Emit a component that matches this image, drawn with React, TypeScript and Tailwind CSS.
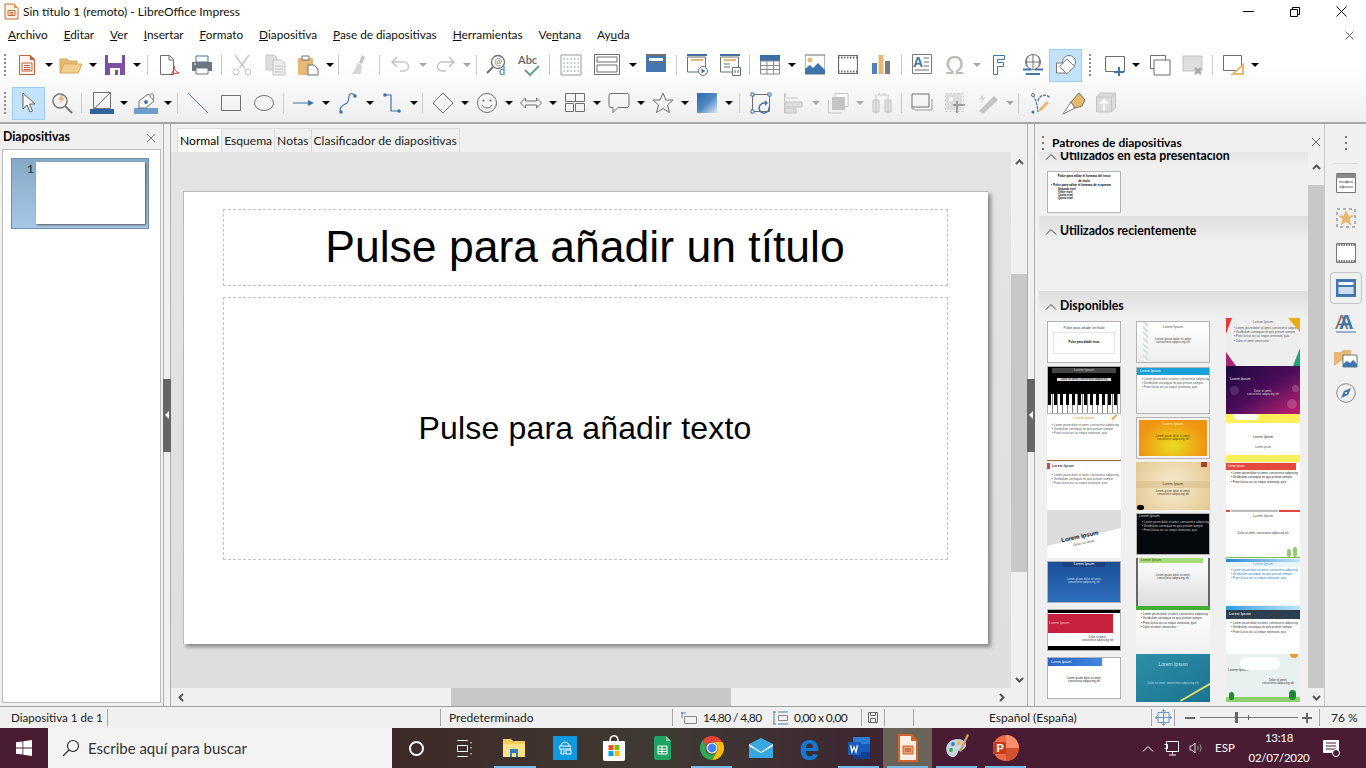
import type { ReactNode } from 'react';

const BLUE = '#3f74ad';
const GRAY = '#6f6f6f';
const OFF = '#c4c4c4';
const TAN = '#e6b873';
const RUST = '#c4603c';

function Ico({ children, w = 22, h = 22 }: { children: ReactNode; w?: number; h?: number }) {
  return (
    <svg width={w} height={h} viewBox={`0 0 ${w} ${h}`} fill="none" stroke={GRAY} strokeWidth="1">
      {children}
    </svg>
  );
}

function C({ children, className = '' }: { children: ReactNode; className?: string }) {
  return <div className={`flex h-[33px] w-[33px] shrink-0 items-center justify-center ${className}`}>{children}</div>;
}

function A({ off = false, className = '' }: { off?: boolean; className?: string }) {
  return (
    <div className={`flex h-[33px] w-[11px] shrink-0 items-center justify-center ${className}`}>
      <div className={`h-0 w-0 border-x-[4px] border-t-[4px] border-x-transparent ${off ? 'border-t-[#a8a8a8]' : 'border-t-black'}`} />
    </div>
  );
}

function S({ className = 'w-[7px]' }: { className?: string }) {
  return (
    <div className={`flex h-[33px] shrink-0 items-center justify-center ${className}`}>
      <div className="h-[20px] w-px bg-[#c9c9c9]" />
    </div>
  );
}

function Grip({ className = '' }: { className?: string }) {
  return (
    <div className={`flex h-[22px] shrink-0 flex-col justify-between ${className}`}>
      {[0, 1, 2, 3, 4, 5].map((i) => (
        <div key={i} className="h-[2px] w-[2px] bg-[#8c8c8c]" />
      ))}
    </div>
  );
}

function ToolbarOne() {
  return (
    <div className="flex h-[38px] items-center pl-[4px]">
      <Grip className="w-[6px]" />
      <C>
        <Ico>
          <path d="M3.500 1.500h11l4 4v15h-15z" stroke={RUST} fill="#fdf4ee" />
          <path d="M14 1l5 5h-5z" fill={RUST} stroke="none" />
          <path d="M6 9h10v8H6z" stroke={RUST} />
          <path d="M8 11.500h6M8 13.500h6M8 15.500h6" stroke={RUST} />
        </Ico>
      </C>
      <A />
      <C>
        <Ico w={24}>
          <path d="M1 19V5h7l2 2h8v3" stroke="#d9a95f" fill={TAN} />
          <path d="M1 19l4-9h18l-4 9z" fill="#f2cf93" stroke="#d9a95f" />
        </Ico>
      </C>
      <A />
      <C>
        <Ico>
          <path d="M1 1h20v20H1z" fill="#7f4fa6" stroke="none" />
          <path d="M4 1h14v8H4z" fill="#fff" stroke="none" />
          <path d="M6 14h10v7H6z" fill="#fff" stroke="none" />
          <path d="M11 16h3v5h-3z" fill="#7f4fa6" stroke="none" />
        </Ico>
      </C>
      <A />
      <S className="w-[10px]" />
      <C>
        <Ico>
          <path d="M2.500 1.500h9l4 4v15h-13z" />
          <path d="M11 1.500v4.500h4.500" />
          <path d="M13 21c2-3 3-6 3-9 0 4 2 6 5 7-3 0-6 1-8 2z" stroke="#d93b2b" />
        </Ico>
      </C>
      <C>
        <Ico>
          <path d="M5 2h12v6H5z" fill="#fff" stroke={BLUE} />
          <path d="M1 8h20v9H1z" fill="#6d7680" stroke="none" />
          <path d="M5 14h12v6H5z" fill="#fff" stroke="#6d7680" />
          <path d="M3 10h2" stroke="#fff" />
        </Ico>
      </C>
      <S />
      <C>
        <Ico>
          <g stroke={OFF}>
            <path d="M4 1l9.500 13M18 1L8.500 14" strokeWidth="1.300" />
            <circle cx="5" cy="18" r="3" />
            <circle cx="17" cy="18" r="3" />
          </g>
        </Ico>
      </C>
      <C>
        <Ico>
          <path d="M2 1h8l3 3v12H2z" fill="#dedede" stroke={OFF} />
          <path d="M9 6h8l4 4v11H9z" fill="#ececec" stroke={OFF} />
          <path d="M11 12h8M11 15h8M11 18h8" stroke={OFF} />
        </Ico>
      </C>
      <C>
        <Ico>
          <path d="M1 4h15v17H1z" fill={TAN} stroke="none" />
          <path d="M5 2h7v4H5z" fill="#fff" stroke={GRAY} />
          <path d="M11 11h6l4 4v6H11z" fill="#fff" stroke={GRAY} />
        </Ico>
      </C>
      <A />
      <S />
      <C>
        <Ico>
          <path d="M14 1l3 2-3 7-3-1z" fill={OFF} stroke="none" />
          <path d="M9 9l5 2-1 9H3c3-2 5-6 6-11z" fill="#d6d6d6" stroke="none" />
        </Ico>
      </C>
      <S className="w-[9px]" />
      <C>
        <Ico>
          <path d="M7 3L2 8l5 5M2 8h12c6 0 6 9 0 9h-4" stroke={OFF} strokeWidth="1.500" />
        </Ico>
      </C>
      <A off />
      <C>
        <Ico>
          <path d="M15 3l5 5-5 5M20 8H8c-6 0-6 9 0 9h4" stroke={OFF} strokeWidth="1.500" />
        </Ico>
      </C>
      <A off />
      <S className="w-[8px]" />
      <C>
        <Ico>
          <circle cx="12" cy="8" r="6.500" stroke={GRAY} strokeWidth="1.300" />
          <path d="M7 13l-6 6" stroke={GRAY} strokeWidth="2" />
          <text x="8.500" y="11" fontSize="9" fill={GRAY} stroke="none">@</text>
          <text x="13" y="21" fontSize="11" fill={BLUE} stroke="none">d</text>
        </Ico>
      </C>
      <C>
        <Ico w={24}>
          <text x="0" y="10" fontSize="11" fontWeight="700" fill={GRAY} stroke="none">Abc</text>
          <path d="M7 16l5 5 9-9" stroke="#62a87a" strokeWidth="2" />
        </Ico>
      </C>
      <S />
      <C className="ml-[1px]">
        <Ico>
          <path d="M1 1h20v20H1z" stroke="#9a9a9a" />
          <path d="M3.500 5h16M3.500 9h16M3.500 13h16M3.500 17h16" stroke="#6d8fb5" strokeDasharray="1.500 2" />
        </Ico>
      </C>
      <C className="ml-[3px]">
        <Ico w={26}>
          <path d="M0.500 0.500h25v20h-25z" strokeWidth="1" />
          <path d="M3 3h20v5H3zM3 11h20v7H3z" />
        </Ico>
      </C>
      <A className="ml-[4px]" />
      <C className="ml-[1px]">
        <Ico w={20}>
          <path d="M0 1h20v17H0z" fill="#4278b2" stroke="none" />
          <path d="M3 4h14v3H3z" fill="#fff" stroke="none" />
          <path d="M0 0.500h20v1H0zM0 8.500h20" stroke="#6f6f6f" />
        </Ico>
      </C>
      <S className="w-[8px]" />
      <C>
        <Ico>
          <path d="M1 1h20" stroke="#44719f" strokeWidth="2" />
          <path d="M1.500 3h18v15h-18z" />
          <path d="M5 6h12" stroke={TAN} strokeWidth="2" />
          <circle cx="17" cy="17" r="4.500" fill="#fff" />
          <path d="M15.500 14.500v5l4-2.500z" fill={BLUE} stroke="none" />
        </Ico>
      </C>
      <C>
        <Ico>
          <path d="M1 1h20" stroke="#44719f" strokeWidth="2" />
          <path d="M1.500 3h18v15h-18z" />
          <path d="M5 6h12" stroke={TAN} strokeWidth="2" />
          <path d="M5 10h6M5 13h6" />
          <path d="M13.500 13.500h8v8h-8z" fill="#fff" />
          <path d="M16 16v3M19 16v3" stroke={BLUE} />
        </Ico>
      </C>
      <S />
      <C>
        <Ico w={20}>
          <path d="M0 1h20v6H0z" fill="#3c6fa8" stroke="none" />
          <path d="M0.500 7h19v13h-19zM0 11.500h20M0 15.500h20M7 7v13M13.500 7v13" stroke="#8a8a8a" />
        </Ico>
      </C>
      <A />
      <C className="ml-[1px]">
        <Ico w={20}>
          <path d="M0 1h20v19H0z" fill="#fff" stroke={GRAY} />
          <circle cx="5" cy="6" r="2.500" fill={TAN} stroke="none" />
          <path d="M0 20v-5l5-4 3 3 5-5 7 7v4z" fill={BLUE} stroke="none" />
        </Ico>
      </C>
      <C>
        <Ico w={20}>
          <path d="M0.500 1.500h19v18h-19z" stroke="#6b6b6b" strokeWidth="1.200" />
          <path d="M0 3.500h20M0 17.500h20" stroke="#6b6b6b" strokeDasharray="1.500 1.500" strokeWidth="2" />
        </Ico>
      </C>
      <C>
        <Ico w={20}>
          <path d="M1 9h5v11H1z" fill="#4f82b8" stroke="none" />
          <path d="M7.500 1h5v19h-5z" fill={TAN} stroke="none" />
          <path d="M14 7h5v13h-5z" fill="#7b7b7b" stroke="none" />
        </Ico>
      </C>
      <S className="w-[8px]" />
      <C>
        <Ico w={20}>
          <path d="M0.500 0.500h19v19H0.500z" fill="#fff" stroke="#7a7a7a" />
          <text x="1" y="13" fontSize="14" fontWeight="700" fill={BLUE} stroke="none" fontFamily="Liberation Sans">A</text>
          <path d="M12 4h5M12 8h5M12 12h5M3 16h14" />
        </Ico>
      </C>
      <C>
        <span className="font-['Liberation_Sans',sans-serif] text-[25px] leading-none text-[#b9b9b9]">Ω</span>
      </C>
      <A off />
      <C>
        <Ico w={14}>
          <path d="M1.500 1.500h11v4h-7v3h6v4h-6v8h-4z" stroke={BLUE} fill="#fff" />
        </Ico>
      </C>
      <C className="ml-[1px]">
        <Ico>
          <circle cx="11" cy="8" r="7.500" stroke="#707070" />
          <path d="M11 0.500v14M3.500 8h15M6 2c-2 3-2 8 0 11M16 2c2 3 2 8 0 11" stroke="#707070" />
          <path d="M1 15.500h8M13 15.500h8M4 20h14" stroke={BLUE} strokeWidth="2" />
        </Ico>
      </C>
      <C className="border border-[#9fcdf0] bg-[#c3e2fb]">
        <Ico>
          <circle cx="14" cy="8" r="6.500" fill="#fff" stroke="#7a7a7a" />
          <path d="M1.500 9h10v10h-10z" fill="#fff" stroke="#7a7a7a" />
          <path d="M12 5l7.500 7.500L12 20l-7.500-7.500z" fill="#fff" stroke="#7a7a7a" />
        </Ico>
      </C>
      <Grip className="ml-[7px] mr-[7px] w-[2px]" />
      <C>
        <Ico>
          <path d="M1.500 2.500h19v15h-19z" stroke="#6f6f6f" />
          <path d="M15 13v9M10 18h10" stroke={BLUE} strokeWidth="2" />
        </Ico>
      </C>
      <A className="-ml-[1px]" />
      <C className="ml-[2px]">
        <Ico>
          <path d="M1.500 1.500h15v13h-15z" />
          <path d="M5 6h16v15H5z" fill="#fff" />
        </Ico>
      </C>
      <C>
        <Ico>
          <path d="M1 2h19v15H1z" fill="#dedede" stroke={OFF} />
          <path d="M13 14l6 6M19 14l-6 6" stroke="#a9a9a9" strokeWidth="2.500" />
        </Ico>
      </C>
      <S />
      <C>
        <Ico>
          <path d="M1.500 1.500h18v15h-18z" />
          <path d="M21 11v9H11z" fill="#fff" stroke={TAN} strokeWidth="2" />
        </Ico>
      </C>
      <A />
    </div>
  );
}

function ToolbarTwo() {
  return (
    <div className="flex h-[38px] items-center pl-[4px]">
      <Grip className="mr-[6px] w-[2px]" />
      <C className="border border-[#9fcdf0] bg-[#c3e2fb]">
        <Ico>
          <path d="M5 1v16l4-4 3 7 2.500-1-3-7H17z" fill="#fff" stroke="#5e5e5e" />
        </Ico>
      </C>
      <C>
        <Ico>
          <path d="M11 2l-4 6 3 0-2 4 6-6h-3l2-4z" fill={TAN} stroke="none" />
          <circle cx="9" cy="9" r="7" stroke="#7a7a7a" strokeWidth="1.500" />
          <path d="M14 14l7 7" stroke="#7a7a7a" strokeWidth="2" />
        </Ico>
      </C>
      <S />
      <C>
        <Ico w={24}>
          <path d="M0 17h24v5H0z" fill="#30629e" stroke="none" />
          <path d="M3.500 0.500h17v16h-17z" stroke="#6f6f6f" />
          <path d="M5 16L20 1" stroke="#6f6f6f" />
        </Ico>
      </C>
      <A />
      <C>
        <Ico w={24}>
          <path d="M0 16h24v6H0z" fill="#6d9ccd" stroke="none" />
          <path d="M5 9l9-7 6 7-8 7H5z" fill="#fff" stroke="#707070" />
          <circle cx="12" cy="10" r="2" fill={BLUE} stroke="none" />
          <path d="M16 3c3-3 5 1 3 5" />
        </Ico>
      </C>
      <A />
      <S className="w-[8px]" />
      <C>
        <Ico>
          <path d="M1 1l20 20" stroke={BLUE} />
        </Ico>
      </C>
      <C>
        <Ico w={20} h={16}>
          <path d="M0.500 0.500h19v15h-19z" />
        </Ico>
      </C>
      <C>
        <Ico w={20} h={16}>
          <ellipse cx="10" cy="8" rx="9.500" ry="7.500" />
        </Ico>
      </C>
      <S />
      <C>
        <Ico w={21} h={10}>
          <path d="M0 5h19" stroke={BLUE} />
          <path d="M15 2l6 3-6 3z" fill={BLUE} stroke="none" />
        </Ico>
      </C>
      <A />
      <C>
        <Ico w={18}>
          <path d="M2 20c-3-5 3-7 6-9 3-3 1-8 3-9 2-1 4 0 5 2" stroke={BLUE} strokeWidth="1.200" />
          <circle cx="2" cy="20" r="1.800" fill={BLUE} stroke="none" />
          <circle cx="16" cy="4" r="1.800" fill={BLUE} stroke="none" />
        </Ico>
      </C>
      <A />
      <C>
        <Ico w={18}>
          <path d="M2 3h6v16h8" stroke={BLUE} strokeWidth="1.200" />
          <circle cx="2" cy="3" r="1.800" fill={BLUE} stroke="none" />
          <circle cx="16" cy="19" r="1.800" fill={BLUE} stroke="none" />
        </Ico>
      </C>
      <A />
      <S />
      <C>
        <Ico>
          <path d="M11 1l10 10-10 10L1 11z" />
        </Ico>
      </C>
      <A />
      <C>
        <Ico>
          <circle cx="11" cy="11" r="9.500" />
          <circle cx="7.500" cy="8.500" r="1.100" fill={GRAY} stroke="none" />
          <circle cx="14.500" cy="8.500" r="1.100" fill={GRAY} stroke="none" />
          <path d="M6 13c2 4 8 4 10 0" />
        </Ico>
      </C>
      <A />
      <C>
        <Ico h={14}>
          <path d="M0.500 7l5-5v3h11V2l5 5-5 5V9h-11v3z" />
        </Ico>
      </C>
      <A />
      <C>
        <Ico w={20}>
          <path d="M0.500 1.500h19v8h-19zM10.500 1.500v8M0.500 11.500h8v8h-8zM10.500 11.500h9v8h-9z" />
        </Ico>
      </C>
      <A />
      <C>
        <Ico>
          <path d="M3 1.500h16a2 2 0 0 1 2 2v10a2 2 0 0 1-2 2h-9l-5 5v-5H3a2 2 0 0 1-2-2v-10a2 2 0 0 1 2-2z" />
        </Ico>
      </C>
      <A />
      <C>
        <Ico>
          <path d="M11 1l3 7h7l-5.500 5 2 7.500L11 16.500l-6.500 4 2-7.500L1 8h7z" />
        </Ico>
      </C>
      <A />
      <div className="flex h-[33px] w-[33px] shrink-0 items-center justify-center">
        <div className="h-[20px] w-[20px] rounded-[1px] bg-gradient-to-br from-[#2f6cb0] via-[#4f88c4] to-[#dbe8f4]" />
      </div>
      <A />
      <S className="w-[10px]" />
      <C>
        <Ico>
          <path d="M2.500 2.500h17v17h-17z" />
          <path d="M1 1h3v3H1zM18 1h3v3h-3zM1 18h3v3H1z" stroke={BLUE} fill="#fff" />
          <path d="M19 15a5 5 0 1 1-5-4h3" stroke={BLUE} strokeWidth="1.500" />
          <path d="M15 8l3 3-3 3z" fill={BLUE} stroke="none" />
        </Ico>
      </C>
      <C>
        <Ico>
          <g stroke={OFF}>
            <path d="M1.500 1v20" />
            <path d="M4 6h11M4 1.500L2 4l2 2.500" />
            <path d="M2 10h17v5H2z" fill="#dedede" />
            <path d="M2 16h11v5H2z" fill="#dedede" />
          </g>
        </Ico>
      </C>
      <A off />
      <C>
        <Ico>
          <path d="M8 1.500h13v13h-13z" stroke={OFF} fill="#fff" />
          <path d="M5 5h13v13H5z" fill={OFF} stroke="none" />
          <path d="M1.500 8v13h13" stroke={OFF} />
        </Ico>
      </C>
      <A off />
      <C>
        <Ico>
          <g stroke={OFF}>
            <path d="M2 8h6v12H2zM14 8h6v12h-6z" fill="#e2e2e2" />
            <path d="M5 2v20M17 2v20M7 3h8M7 3l2-2M15 3l-2-2" />
          </g>
        </Ico>
      </C>
      <S />
      <C>
        <Ico h={20}>
          <path d="M1 1h17v13H1z" />
          <path d="M4 17h17V6M1 14v2h3" stroke="#9a9a9a" />
        </Ico>
      </C>
      <C>
        <Ico>
          <path d="M1.500 1.500h18v18h-18z" stroke={OFF} strokeDasharray="2 2" />
          <path d="M2 2h16v16H2z" fill="#dcdcdc" stroke="none" />
          <path d="M13 9v12M9 13h12" stroke="#9e9e9e" strokeWidth="2" />
          <circle cx="7" cy="7" r="2" fill="#fff" stroke="none" />
        </Ico>
      </C>
      <C>
        <Ico w={24}>
          <path d="M3 19L18 4l4 4L7 22z" fill={OFF} stroke="none" />
          <path d="M7 2L3 8l3-1-1 4 5-6-3 1z" fill="#d4d4d4" stroke="none" />
        </Ico>
      </C>
      <A off />
      <S />
      <C className="ml-[2px]">
        <Ico>
          <path d="M3 3c4 7 4 10 5 17M8 9c1-6 8-8 12-3" stroke="#4a6f9a" strokeWidth="1.300" strokeDasharray="3 1" />
          <path d="M8 20l3-1 8-8-2-2-8 8z" fill={TAN} stroke="none" />
          <circle cx="3" cy="3" r="1.500" fill="#fff" stroke={GRAY} />
          <circle cx="3" cy="20" r="1.500" fill={BLUE} stroke="none" />
        </Ico>
      </C>
      <C>
        <Ico w={24}>
          <path d="M9 10L17 1l6 7-3 6-7 2z" fill={TAN} stroke="#7c6a4c" />
          <path d="M9 10l4 6-12 6z" fill="#fff" stroke="#7a7a7a" />
        </Ico>
      </C>
      <C className="-ml-[1px]">
        <Ico w={20}>
          <path d="M0.500 5l4-4h15v15l-4 4h-15z" fill="#dcdcdc" stroke={OFF} />
          <path d="M0.500 5h15v15M15.500 5l4-4" stroke={OFF} />
          <path d="M8 18V9M4 12l4-4 4 4" stroke="#fff" strokeWidth="2" />
        </Ico>
      </C>
    </div>
  );
}

function Thumb({ className = '', children }: { className?: string; children?: ReactNode }) {
  return <div className={`relative w-[74px] overflow-hidden border border-[#b4b4b4] font-['Liberation_Sans',sans-serif] text-[3.500px] leading-[4.500px] ${className}`}>{children}</div>;
}

function Bullets({ className = 'text-[#555]', lines = 3 }: { className?: string; lines?: number }) {
  const rows = ['Lorem ipsum dolor sit amet, consectetur adipiscing', 'Vestibulum consequat mi quis pretium semper', 'Proin luctus orci ac neque venenatis, quis', 'Dolor sit amet consectetur'];
  return (
    <div className={`flex flex-col gap-[1px] pl-[5px] pr-[3px] text-[2.900px] leading-[3.400px] ${className}`}>
      {rows.slice(0, lines).map((r) => (
        <div key={r} className="whitespace-nowrap">• {r}</div>
      ))}
    </div>
  );
}

function MasterGrid() {
  return (
    <div className="grid grid-cols-[89px_90px_74px] grid-rows-[repeat(8,48px)] items-center pl-[8px]">
      <Thumb className="h-[42px] bg-white">
        <div className="pt-[4px] text-center text-[#333]">Pulse para añadir un título</div>
        <div className="mx-[5px] mt-[1px] flex h-[22px] items-center justify-center border border-[#e4e4e4] text-[2.800px] font-bold">Pulse para añadir texto</div>
      </Thumb>
      <Thumb className="h-[42px] bg-gradient-to-b from-white to-[#eeeeee]">
        <div className="absolute left-[6px] top-0 h-full w-[5px] bg-[repeating-linear-gradient(45deg,#cfe0ee_0,#cfe0ee_2px,#ffffff_2px,#ffffff_4px)]" />
        <div className="pt-[3px] text-center text-[#555]">Lorem Ipsum</div>
        <div className="pt-[8px] text-center text-[3px] leading-[3.500px] text-[#444]">Lorem ipsum dolor sit amet<br />consectetur adipiscing elit</div>
      </Thumb>
      <Thumb className="h-[48px] border-0 bg-[#eeeeee]">
        <div className="absolute left-0 top-0 h-[16px] w-[6px] bg-[#e83a3a] [clip-path:polygon(0_0,100%_0,0_100%)]" />
        <div className="absolute right-0 top-0 h-[14px] w-[12px] bg-[#e8ae10] [clip-path:polygon(0_0,100%_0,100%_100%)]" />
        <div className="absolute bottom-0 left-0 h-[14px] w-[10px] bg-[#a8286e] [clip-path:polygon(0_0,100%_100%,0_100%)]" />
        <div className="absolute bottom-0 right-0 h-[18px] w-[7px] bg-[#23a07c] [clip-path:polygon(100%_0,100%_100%,0_100%)]" />
        <div className="pt-[2px] text-center text-[#666]">Lorem Ipsum</div>
        <div className="pl-[3px] pt-[2px]"><Bullets lines={4} /></div>
      </Thumb>

      <Thumb className="h-[48px] bg-white">
        <div className="h-[27px] bg-black pt-[1px]">
          <div className="mx-[4px] bg-[#444] text-center text-[#ccc]">Lorem Ipsum</div>
          <div className="mx-[9px] mt-[5px] bg-[#dddddd] text-center text-[2.800px] leading-[3.500px] text-black">Dolor sit amet, consectetur adipiscing</div>
        </div>
        <div className="h-[21px] bg-[repeating-linear-gradient(90deg,#ffffff_0,#ffffff_4px,#888_4px,#888_5px)]">
          <div className="h-[11px] bg-[repeating-linear-gradient(90deg,#000_0,#000_3px,transparent_3px,transparent_6px)]" />
        </div>
      </Thumb>
      <Thumb className="h-[47px] bg-gradient-to-b from-white to-[#f1f1f1]">
        <div className="mb-[3px] h-[7px] bg-[#17a0d8] pl-[3px] leading-[7px] text-white">Lorem Ipsum</div>
        <Bullets />
      </Thumb>
      <Thumb className="h-[48px] border-0 bg-gradient-to-br from-[#1d0740] via-[#4b0c58] to-[#c61a72]">
        <div className="absolute bottom-[5px] right-[3px] h-[10px] w-[10px] rounded-full bg-[#ffffff30]" />
        <div className="absolute left-[4px] top-[20px] h-[9px] w-[9px] rounded-full bg-[#ffffff20]" />
        <div className="absolute right-[1px] top-[19px] h-[7px] w-[7px] rounded-full bg-[#ffffff30]" />
        <div className="pl-[4px] pt-[11px] text-[#eee]">Lorem Ipsum</div>
        <div className="pt-[8px] text-center text-[2.800px] leading-[3.200px] text-[#ddd]">Dolor sit amet,<br />consectetur adipiscing elit</div>
      </Thumb>

      <Thumb className="h-[46px] border-0 bg-white">
        <div className="pt-[1px] text-center text-[#e88a1c]">Lorem Ipsum</div>
        <div className="absolute right-[3px] top-[1px] h-[2px] w-[7px] -rotate-45 bg-[#eca848]" />
        <div className="pt-[3px]"><Bullets /></div>
        <div className="absolute bottom-0 left-0 h-px w-full bg-[#9a6a40]" />
      </Thumb>
      <Thumb className="h-[42px] border-[#9c8468] bg-[#f3f3f3] p-[2px]">
        <div className="h-full bg-[radial-gradient(ellipse_at_center_70%,#e8de20,#f09412_70%)] pt-[2px] text-center text-[#fff3c0]">
          <div>Lorem Ipsum</div>
          <div className="pt-[8px] text-[2.800px] leading-[3.200px] text-[#5a3a00]">Lorem ipsum dolor sit amet,<br />consectetur adipiscing elit</div>
        </div>
      </Thumb>
      <Thumb className="h-[48px] border-0 bg-white">
        <div className="h-[9px] bg-[#fff05a]">
          <div className="ml-[8px] h-[6px] w-[24px] rounded-b-[3px] bg-white" />
        </div>
        <div className="pt-[12px] text-center text-[#333]">Lorem Ipsum</div>
        <div className="pt-[5px] text-center text-[2.800px] text-[#555]">Lorem ipsum</div>
        <div className="absolute bottom-0 h-[7px] w-full bg-[#fff05a]" />
      </Thumb>

      <Thumb className="h-[48px] border-0 bg-white">
        <div className="absolute left-0 top-[1px] h-[6px] w-[3px] bg-[#e04040]" />
        <div className="pl-[5px] pt-[2px] font-bold text-[#444]">Lorem Ipsum</div>
        <div className="pt-[5px]"><Bullets /></div>
      </Thumb>
      <Thumb className="h-[48px] border-0 bg-[radial-gradient(circle,#f6ecd2,#e4c78f)]">
        <div className="absolute right-[3px] top-0 h-[5px] w-[6px] bg-[#a84034]" />
        <div className="absolute bottom-0 left-[1px] h-[5px] w-[7px] rounded-full bg-black" />
        <div className="mt-[19px] bg-[#d8bb8890] py-[1px] text-center text-[#4a3420]">Lorem Ipsum</div>
        <div className="pt-[2px] text-center text-[2.800px] leading-[3.200px] text-[#4a3420]">Lorem ipsum dolor sit amet,<br />consectetur adipiscing elit</div>
      </Thumb>
      <Thumb className="h-[46px] border-0 bg-white">
        <div className="mb-[2px] h-[7px] w-[70px] bg-[#e5483d] pl-[2px] text-[2.800px] leading-[7px] text-white">Lorem Ipsum</div>
        <Bullets className="text-[#222]" />
      </Thumb>

      <Thumb className="h-[48px] border-0 bg-white">
        <div className="absolute left-0 top-0 h-[36px] w-full bg-[#dcdcdc] [clip-path:polygon(0_0,100%_0,100%_50%,0_100%)]" />
        <div className="absolute left-[14px] top-[22px] w-[50px] -rotate-12 text-[6px] font-bold leading-[7px] text-[#222]">Lorem Ipsum</div>
        <div className="absolute left-[26px] top-[31px] -rotate-12 text-[#444]">Dolor sit amet</div>
      </Thumb>
      <Thumb className="h-[42px] bg-[#05080c]">
        <div className="pl-[2px] text-[#ddd]">Lorem Ipsum</div>
        <div className="pt-[2px]"><Bullets className="text-[#ccc]" /></div>
      </Thumb>
      <Thumb className="h-[48px] border-0 bg-white">
        <div className="flex h-[2px]">
          <div className="w-[4px] bg-[#e5483d]" />
          <div className="ml-[1px] w-[47px] bg-[#bdbdbd]" />
          <div className="ml-[1px] flex-1 bg-[#e5483d]" />
        </div>
        <div className="pt-[2px] text-center text-[#555]">Lorem Ipsum</div>
        <div className="pt-[12px] text-center text-[2.800px] text-[#333]">Dolor sit amet, consectetur adipiscing elit</div>
        <div className="absolute bottom-[1px] right-[3px] h-[10px] w-[4px] rounded-full bg-[#8fce6a]" />
        <div className="absolute bottom-[1px] right-[9px] h-[8px] w-[4px] rounded-full bg-[#8fce6a]" />
        <div className="absolute bottom-0 h-px w-full bg-[#7ac04e]" />
      </Thumb>

      <Thumb className="h-[42px] bg-gradient-to-b from-[#1c4f9a] to-[#2d6fbb] text-white">
        <div className="mx-[15px] bg-[#1b4380] text-center">Lorem Ipsum</div>
        <div className="pt-[11px] text-center text-[2.800px] leading-[3.200px] text-[#cde]">Lorem ipsum dolor sit amet,<br />consectetur adipiscing elit</div>
      </Thumb>
      <Thumb className="h-[48px] border-x-2 border-y-0 border-x-[#666] bg-gradient-to-b from-white to-[#dcdcdc]">
        <div className="ml-[1px] mr-[5px] bg-[#a6dc78] pl-[2px] text-[#2f5a10]">Lorem Ipsum</div>
        <div className="pt-[11px] text-center text-[2.800px] leading-[3.200px] text-[#333]">Lorem ipsum dolor sit amet,<br />consectetur adipiscing elit</div>
      </Thumb>
      <Thumb className="h-[46px] border-0 bg-white">
        <div className="h-[3px] bg-gradient-to-r from-[#1d88d0] to-[#bde3f6]" />
        <div className="bg-[#e9f5fc] text-center text-[#4aa0d8]">Lorem Ipsum</div>
        <div className="pt-[2px]"><Bullets className="text-[#2a76c0]" /></div>
      </Thumb>

      <Thumb className="h-[42px] bg-white">
        <div className="h-[3px] bg-black" />
        <div className="mr-[7px] mt-[1px] h-[19px] bg-[#c8213d] pl-[1px] pt-[7px] text-[#f3c0c8]">Lorem Ipsum</div>
        <div className="pl-[27px] pt-[3px] text-center text-[2.800px] leading-[3.200px] text-[#333]">Dolor sit amet,<br />consectetur adipiscing elit</div>
        <div className="absolute bottom-0 h-[4px] w-full bg-black" />
      </Thumb>
      <Thumb className="h-[48px] border-0 bg-gradient-to-b from-white to-[#efefef]">
        <div className="h-[4px] bg-[#3fb030]" />
        <div className="pt-[3px]"><Bullets lines={4} className="text-[#333]" /></div>
      </Thumb>
      <Thumb className="h-[48px] border-0 bg-white">
        <div className="h-[4px] bg-gradient-to-r from-[#22a0e0] to-[#bce4f6]" />
        <div className="h-[9px] bg-[#2c3e50] pl-[3px] font-bold leading-[9px] text-[#ddd]">Lorem Ipsum</div>
        <div className="pt-[3px]"><Bullets className="text-[#333]" /></div>
      </Thumb>

      <Thumb className="h-[42px] bg-white">
        <div className="mr-[18px] h-[8px] bg-gradient-to-r from-[#2a66c8] to-[#3f86e0] pl-[3px] leading-[8px] text-white">Lorem Ipsum</div>
        <div className="pt-[11px] text-center text-[2.800px] leading-[3.200px] text-[#222]">Lorem ipsum dolor sit amet,<br />consectetur adipiscing elit</div>
      </Thumb>
      <Thumb className="h-[48px] border-0 bg-gradient-to-br from-[#2e8fa8] to-[#1b7390]">
        <div className="pt-[7px] text-center text-[5px] leading-[6px] text-[#c6e6ee]">Lorem Ipsum</div>
        <div className="pt-[14px] text-center text-[2.800px] text-[#bde]">Dolor sit amet, consectetur adipiscing elit</div>
        <div className="absolute bottom-[9px] right-[-4px] h-[2px] w-[36px] -rotate-[30deg] bg-[#e3dc62]" />
      </Thumb>
      <Thumb className="h-[48px] border-0 bg-[#e9f0f0]">
        <div className="absolute left-[14px] top-[3px] h-[13px] w-[40px] rounded-full bg-white" />
        <div className="absolute right-[2px] top-0 h-[4px] w-[8px] rounded-b-full bg-[#e89a2c]" />
        <div className="absolute bottom-0 h-[5px] w-full bg-[#8ed070]" />
        <div className="absolute bottom-[2px] left-[3px] h-[8px] w-[5px] rounded-full bg-[#1f8a30]" />
        <div className="absolute bottom-[2px] right-[4px] h-[10px] w-[7px] rounded-full bg-[#1f8a30]" />
        <div className="pl-[2px] pt-[14px] text-[#333]">Lorem Ipsum</div>
        <div className="pl-[30px] pt-[6px] text-center text-[2.800px] leading-[3.200px] text-[#333]">Dolor sit amet,<br />consectetur adipiscing elit</div>
      </Thumb>
    </div>
  );
}

function SectionHead({ title }: { title: string }) {
  return (
    <div className="flex h-[27px] items-center gap-[3px] bg-gradient-to-b from-[#dedede] to-[#f0f0f0] pl-[6px] pt-[4px] text-[12.250px] font-bold text-black">
      <svg width="12" height="7" viewBox="0 0 12 7" fill="none" stroke="#444">
        <path d="M1 6.500l5-5 5 5" />
      </svg>
      {title}
    </div>
  );
}

function Chevron({ d }: { d: string }) {
  return (
    <svg width="9" height="9" viewBox="0 0 9 9" fill="none" stroke="#555" strokeWidth="2">
      <path d={d} />
    </svg>
  );
}

function RightPanel() {
  return (
    <div className="flex w-[290px] shrink-0 flex-col border-r border-[#c8c8c8] pl-[4px] pt-[4px]">
      <div className="flex h-[22px] items-center pl-[3px] pt-[5px]">
        <div className="mt-[2px] flex h-[14px] flex-col justify-between">
          {[0, 1, 2].map((i) => (
            <div key={i} className="h-[2px] w-[2px] bg-[#777]" />
          ))}
        </div>
        <span className="ml-[8px] mt-[3px] text-[12px] font-bold text-black">Patrones de diapositivas</span>
        <svg className="ml-auto mr-[3px]" width="10" height="10" viewBox="0 0 10 10" stroke="#666">
          <path d="M1 1l8 8M9 1L1 9" />
        </svg>
      </div>
      <div className="flex min-h-0 flex-1">
        <div className="mt-[2px] w-[269px] shrink-0 overflow-hidden">
          <div className="-mt-[11px]">
            <SectionHead title="Utilizados en esta presentación" />
            <div className="h-[48px] pl-[8px] pt-[3px]">
              <Thumb className="h-[42px] bg-white text-[3px] leading-[3.600px]">
                <div className="px-[8px] pt-[2px] text-center font-bold">Pulse para editar el formato del texto de título</div>
                <div className="pl-[3px] font-bold">• Pulse para editar el formato de esquema</div>
                <div className="pl-[10px] text-[2.600px] font-bold leading-[3px]">Segundo nivel<br />Tercer nivel<br />Cuarto nivel<br />Quinto nivel</div>
              </Thumb>
            </div>
            <SectionHead title="Utilizados recientemente" />
            <div className="h-[48px]" />
            <SectionHead title="Disponibles" />
            <MasterGrid />
          </div>
        </div>
        <div className="flex w-[16px] shrink-0 flex-col">
          <div className="flex h-[35px] items-center justify-center"><Chevron d="M1 6l3.500-3.500L8 6" /></div>
          <div className="flex-1 bg-[#c8c8c8]" />
          <div className="flex h-[18px] items-center justify-center"><Chevron d="M1 3l3.500 3.500L8 3" /></div>
        </div>
      </div>
    </div>
  );
}

function SideTabs() {
  return (
    <div className="flex flex-1 flex-col items-center pt-[12px]">
      <div className="flex h-[14px] flex-col justify-between">
        {[0, 1, 2].map((i) => (
          <div key={i} className="h-[2px] w-[2px] bg-[#777]" />
        ))}
      </div>
      <div className="mt-[13px] h-px w-[24px] bg-[#dcdcdc]" />
      <div className="mt-[7px] flex h-[24px] items-center">
        <Ico w={20} h={20}>
          <path d="M0.500 0.500h19v19h-19z" fill="#fff" stroke="#777" />
          <path d="M0 1h20v4H0z" fill="#888" stroke="none" />
          <path d="M3 9h14M3 14h14" />
          <path d="M11 7.500v3M7 12.500v3" />
        </Ico>
      </div>
      <div className="mt-[11px] flex h-[24px] items-center">
        <Ico w={20} h={20}>
          <path d="M1 1h18v18H1z" strokeDasharray="3 3" />
          <path d="M10 2l2.500 5.500H18L13.500 11l2 6.500L10 14l-5.500 3.500 2-6.500L2 7.500h5.500z" fill={TAN} stroke="none" />
        </Ico>
      </div>
      <div className="mt-[11px] flex h-[24px] items-center">
        <Ico w={20} h={20}>
          <path d="M0.500 0.500h19v19h-19z" fill="#fff" stroke="#777" />
          <path d="M0 2h20M0 18h20" stroke="#777" strokeWidth="2" strokeDasharray="1.500 1" />
        </Ico>
      </div>
      <div className="mt-[7px] flex h-[32px] w-[32px] items-center justify-center rounded-[4px] border border-[#c4c4c4]">
        <Ico w={20} h={18}>
          <path d="M0 0h20v18H0z" fill="#4278b2" stroke="none" />
          <path d="M2.500 3h15v3h-15z" fill="#fff" stroke="none" />
          <path d="M2.500 8h15v7h-15z" fill="#cfe0f0" stroke="none" />
        </Ico>
      </div>
      <div className="mt-[5px] flex h-[28px] items-center">
        <Ico w={22} h={22}>
          <text x="0" y="17" fontSize="20" fill="#777" stroke="none" fontFamily="Liberation Sans">A</text>
          <text x="4" y="17" fontSize="20" fontWeight="700" fill={BLUE} stroke="none" fontFamily="Liberation Sans">A</text>
          <path d="M1 20h20" stroke={BLUE} />
        </Ico>
      </div>
      <div className="mt-[9px] flex h-[24px] items-center">
        <Ico w={24} h={20}>
          <path d="M0 18V4h7l2-2h8v4" fill={TAN} stroke="none" />
          <path d="M9 7h14v12H9z" fill="#fff" stroke="#777" />
          <path d="M9 19v-3l4-3 3 2 3-3 4 4v3z" fill={BLUE} stroke="none" />
        </Ico>
      </div>
      <div className="mt-[11px] flex h-[24px] items-center">
        <Ico w={20} h={20}>
          <circle cx="10" cy="10" r="9.300" stroke="#888" />
          <path d="M15 5l-3 7-7 3 3-7z" fill={BLUE} stroke="none" />
          <circle cx="10" cy="10" r="1" fill="#fff" stroke="none" />
        </Ico>
      </div>
    </div>
  );
}

function Sash() {
  return (
    <div className="flex w-[8px] shrink-0 flex-col items-center justify-center border-x border-[#b0b0b0]">
      <div className="flex h-[73px] w-[8px] shrink-0 items-center justify-center bg-[#666]">
        <div className="h-0 w-0 border-y-[4px] border-r-[4px] border-y-transparent border-r-white" />
      </div>
    </div>
  );
}

function Editor() {
  return (
    <div className="flex w-[856px] shrink-0 flex-col">
      <div className="flex h-[28px] items-end pl-[6px] text-[12.100px]">
        <div className="flex h-[24px] items-center border-x border-t border-[#dadada] bg-white px-[2px] pt-[1px] text-black">Normal</div>
        <div className="flex h-[24px] items-center border-r border-t border-[#dadada] px-[2px] pt-[1px] text-[#222]">Esquema</div>
        <div className="flex h-[24px] items-center border-r border-t border-[#dadada] px-[2px] pt-[1px] text-[#222]">Notas</div>
        <div className="flex h-[24px] items-center border-r border-t border-[#dadada] px-[2px] pt-[1px] text-[#222]">Clasificador de diapositivas</div>
      </div>
      <div className="flex min-h-0 flex-1">
        <div className="w-[840px] shrink-0 bg-gradient-to-b from-[#e4e4e4] to-[#dedede] pl-[12px] pt-[39px]">
          <div className="flex h-[453px] w-[805px] flex-col items-center border-l border-t border-[#bbb] bg-white pr-[2px] pt-[17px] font-['Liberation_Sans',sans-serif] shadow-[3px_3px_4px_#8a8a8a]">
            <div className="flex h-[77px] w-[725px] items-center justify-center border border-dashed border-[#c4c4c4] pb-[1px] text-[44.500px] text-black">
              Pulse para añadir un título
            </div>
            <div className="mt-[11px] flex h-[263px] w-[725px] items-center justify-center border border-dashed border-[#c4c4c4] pb-[2px] text-[32px] tracking-[0.160px] text-black">
              Pulse para añadir texto
            </div>
          </div>
        </div>
        <div className="flex w-[16px] shrink-0 flex-col">
          <div className="flex h-[122px] items-start justify-center pt-[6px]"><Chevron d="M1 6l3.500-3.500L8 6" /></div>
          <div className="h-[298px] bg-[#c8c8c8]" />
          <div className="flex flex-1 items-end justify-center pb-[4px]"><Chevron d="M1 3l3.500 3.500L8 3" /></div>
        </div>
      </div>
      <div className="flex h-[18px] w-[840px] items-center">
        <div className="flex w-[18px] justify-center pl-[2px]"><Chevron d="M6 1L2.500 4.500 6 8" /></div>
        <div className="ml-[262px] h-full w-[280px] bg-[#c8c8c8]" />
        <div className="ml-auto flex w-[14px] pr-[4px]"><Chevron d="M3 1l3.500 3.500L3 8" /></div>
      </div>
    </div>
  );
}

function StatusSep({ className = '' }: { className?: string }) {
  return <div className={`h-[17px] w-px shrink-0 bg-[#a8a8a8] ${className}`} />;
}

function StatusBar() {
  return (
    <div className="flex h-[22px] shrink-0 items-center border-t border-[#a0a0a0] text-[12px] text-[#222]">
      <span className="w-[107px] shrink-0 whitespace-nowrap pl-[11px] text-[11.600px]">Diapositiva 1 de 1</span>
      <StatusSep />
      <StatusSep className="ml-[332px]" />
      <span className="w-[231px] shrink-0 pl-[8px]">Predeterminado</span>
      <StatusSep />
      <svg className="ml-[8px]" width="16" height="14" viewBox="0 0 16 14" fill="none" stroke="#4a7fb5">
        <path d="M1 1v6M0 2h5" />
        <path d="M3.500 5.500h12v7h-12z" stroke="#888" />
      </svg>
      <span className="ml-[6px] w-[70px] shrink-0 whitespace-nowrap tracking-[-0.600px]">14,80 / 4,80</span>
      <svg width="15" height="14" viewBox="0 0 15 14" fill="none" stroke="#4a7fb5">
        <path d="M1 1v12M0 1h3M0 13h3M5 1h10M5 13h10" />
        <path d="M5.500 4.500h9v5h-9z" stroke="#888" />
      </svg>
      <span className="ml-[6px] w-[67px] shrink-0 whitespace-nowrap tracking-[-0.550px]">0,00 x 0,00</span>
      <StatusSep />
      <svg className="ml-[6px]" width="10" height="11" viewBox="0 0 10 11" fill="none" stroke="#666">
        <path d="M0.500 0.500h9v10h-9zM2.500 0.500v3h5v-3M2.500 10.500v-4h5v4" />
      </svg>
      <StatusSep className="ml-[6px]" />
      <StatusSep className="ml-[28px]" />
      <span className="w-[237px] shrink-0 pl-[75px]">Español (España)</span>
      <StatusSep />
      <svg className="ml-[3px]" width="17" height="17" viewBox="0 0 17 17" fill="none" stroke="#6a98c6">
        <path d="M3 3.500h11v10H3z" />
        <path d="M8.500 0.500v16M0.500 8.500h16M6.500 2.500l2-2 2 2M6.500 14.500l2 2 2-2M2.500 6.500l-2 2 2 2M14.500 6.500l2 2-2 2" />
      </svg>
      <StatusSep className="ml-[2px]" />
      <div className="ml-[10px] h-[2px] w-[10px] bg-[#666]" />
      <div className="relative ml-[5px] h-px w-[98px] bg-[#777]">
        <div className="absolute left-[35px] top-[-5px] h-[11px] w-[3px] bg-[#666]" />
        <div className="absolute left-[48px] top-[-2px] h-[5px] w-px bg-[#666]" />
      </div>
      <div className="relative ml-[4px] h-[2px] w-[10px] bg-[#666]">
        <div className="absolute left-[4px] top-[-4px] h-[10px] w-[2px] bg-[#666]" />
      </div>
      <StatusSep className="ml-[7px]" />
      <span className="ml-[11px]">76 %</span>
    </div>
  );
}

function Tb({ children, className = 'w-[49px]' }: { children: ReactNode; className?: string }) {
  return <div className={`relative flex h-[40px] shrink-0 items-center justify-center ${className}`}>{children}</div>;
}

function Running() {
  return <div className="absolute bottom-0 left-[4px] h-[2px] w-[41px] bg-[#76b9ed]" />;
}

function Taskbar() {
  return (
    <div className="flex h-[40px] shrink-0 bg-[#4a1c33] text-white">
      <div className="flex w-[48px] shrink-0 items-center justify-center">
        <svg width="16" height="16" viewBox="0 0 16 16" fill="#fff">
          <path d="M0 2.300l6.500-.9v6.200H0zM7.300 1.300L16 0v7.600H7.300zM0 8.400h6.500v6.200L0 13.700zM7.300 8.400H16V16l-8.700-1.200z" />
        </svg>
      </div>
      <div className="flex w-[344px] shrink-0 items-center bg-[#f3f3f3] pl-[14px] text-[15px] text-[#333]">
        <svg width="18" height="18" viewBox="0 0 18 18" fill="none" stroke="#222" strokeWidth="1.100">
          <circle cx="11" cy="7" r="5.500" />
          <path d="M7 11l-6 6" />
        </svg>
        <span className="ml-[8px]">Escribe aquí para buscar</span>
      </div>
      <div className="flex shrink-0 bg-gradient-to-r from-[#3d2a28] via-[#3f3a34] to-[#3d2030]">
        <Tb className="w-[48px]">
          <div className="h-[15px] w-[15px] rounded-full border-2 border-white" />
        </Tb>
        <Tb className="w-[48px]">
          <svg width="17" height="17" viewBox="0 0 17 17" fill="none" stroke="#fff">
            <path d="M1 0.500h11M1 16.500h11M1.500 5.500h10v6h-10zM15 2v1.500M15 7v1.500M15 13v1.500" />
          </svg>
        </Tb>
        <Tb className="w-[52px]">
          <svg width="24" height="22" viewBox="0 0 24 22">
            <path d="M1 2h8l2 2h12v16H1z" fill="#f6cd5a" />
            <path d="M1 7h22v13H1z" fill="#ffe189" />
            <path d="M8 12h8v8H8z" fill="#2f7fc4" />
            <path d="M10 16h4v4h-4z" fill="#ffe189" />
          </svg>
          <div className="absolute bottom-0 left-[6px] h-[2px] w-[42px] bg-[#76b9ed]" />
        </Tb>
        <Tb>
          <div className="flex h-[24px] w-[24px] items-center justify-center bg-[#0f9ae0]">
            <svg width="14" height="14" viewBox="0 0 14 14" fill="none" stroke="#fff">
              <path d="M3 5c0-5 8-5 8 0M1.500 5h11v3h-11zM3 8v5h3V9M8 9h5v4H8z" />
            </svg>
          </div>
        </Tb>
        <Tb>
          <svg width="24" height="26" viewBox="0 0 24 26">
            <path d="M1 6h22v18a2 2 0 0 1-2 2H3a2 2 0 0 1-2-2z" fill="#fff" />
            <path d="M8 6c0-7 8-7 8 0" fill="none" stroke="#fff" strokeWidth="1.500" />
            <path d="M6.500 10h5v5h-5z" fill="#f25022" />
            <path d="M12.500 10h5v5h-5z" fill="#7fba00" />
            <path d="M6.500 16h5v5h-5z" fill="#00a4ef" />
            <path d="M12.500 16h5v5h-5z" fill="#ffb900" />
          </svg>
        </Tb>
        <Tb>
          <svg width="17" height="24" viewBox="0 0 17 24">
            <path d="M0 2a2 2 0 0 1 2-2h10l5 5v17a2 2 0 0 1-2 2H2a2 2 0 0 1-2-2z" fill="#1fa463" />
            <path d="M12 0l5 5h-5z" fill="#8ed1b1" />
            <path d="M4 10h9v8H4zM4 13h9M4 15.500h9M8 10v8" fill="none" stroke="#fff" />
          </svg>
        </Tb>
        <Tb>
          <svg width="24" height="24" viewBox="0 0 24 24">
            <path d="M12 0a12 12 0 0 1 10.400 6H12a6 6 0 0 0-5.700 4L2.900 4.200A12 12 0 0 1 12 0z" fill="#ea4335" />
            <path d="M22.400 6A12 12 0 0 1 12 24l4.800-8.400A6 6 0 0 0 17 9a6 6 0 0 0-5-3z" fill="#fbbc05" />
            <path d="M2.900 4.200A12 12 0 0 0 12 24l4.800-8.400a6 6 0 0 1-10.600-5.600z" fill="#34a853" />
            <circle cx="12" cy="12" r="5" fill="#4285f4" stroke="#fff" strokeWidth="1.200" />
          </svg>
          <Running />
        </Tb>
        <Tb>
          <svg width="24" height="20" viewBox="0 0 24 20">
            <path d="M0 6L12 0l12 6v14H0z" fill="#3aa8e0" />
            <path d="M0 6l12 8 12-8v2l-12 7L0 8z" fill="#fff" />
          </svg>
        </Tb>
        <Tb>
          <span className="font-['Liberation_Sans',sans-serif] text-[36px] font-bold leading-[30px] text-[#0f78d4]">e</span>
        </Tb>
        <Tb>
          <svg width="24" height="24" viewBox="0 0 24 24">
            <path d="M6 1h16a1 1 0 0 1 1 1v20a1 1 0 0 1-1 1H6z" fill="#2b7cd3" />
            <path d="M6 8h17v8H6z" fill="#185abd" />
            <path d="M6 16h17v6a1 1 0 0 1-1 1H6z" fill="#103f91" />
            <path d="M1 6h13v13H1z" fill="#185abd" />
            <path d="M3.500 9l1.500 7 2-5 2 5 1.500-7" fill="none" stroke="#fff" strokeWidth="1.300" />
          </svg>
          <Running />
        </Tb>
        <Tb className="w-[49px] bg-[#6b6258]">
          <svg width="20" height="28" viewBox="0 0 20 28">
            <path d="M1 1h12l6 6v20H1z" fill="#fbefe3" stroke="#d2642a" strokeWidth="2" />
            <path d="M13 1l6 6h-6z" fill="#d2642a" />
            <path d="M5 12h10v8H5z" fill="#e9a07c" stroke="#d2642a" />
            <path d="M7 15h6M7 17h6" stroke="#b94f1a" />
          </svg>
          <Running />
        </Tb>
      </div>
      <div className="flex shrink-0">
        <Tb>
          <svg width="24" height="30" viewBox="0 0 24 30">
            <path d="M2 20c-3-8 3-14 11-14 8 0 10 7 6 10-3 2-5 0-6 3-1 3-3 6-6 5-2-.5-4-1.500-5-4z" fill="#c9d6e2" />
            <circle cx="8" cy="11" r="2" fill="#3b82c4" />
            <circle cx="14" cy="10" r="2" fill="#e8b84a" />
            <circle cx="6" cy="17" r="2" fill="#3aa856" />
            <path d="M22 1l2 1-8 17-2-1z" fill="#c9a066" />
          </svg>
          <Running />
        </Tb>
        <Tb>
          <svg width="26" height="26" viewBox="0 0 26 26">
            <circle cx="13" cy="13" r="13" fill="#ed6c47" />
            <path d="M13 13h13a13 13 0 0 0-13-13z" fill="#ff8f6b" />
            <path d="M13 13h13a13 13 0 0 1-13 13z" fill="#d35230" />
            <path d="M0 7h13v12H0z" fill="#c43e1c" />
            <text x="3.500" y="17" fontSize="11" fontWeight="700" fill="#fff" fontFamily="Liberation Sans">P</text>
          </svg>
          <Running />
        </Tb>
      </div>
      <div className="flex min-w-0 flex-1 items-center">
        <svg className="ml-[112px]" width="12" height="7" viewBox="0 0 12 7" fill="none" stroke="#fff">
          <path d="M1 6.500l5-5 5 5" />
        </svg>
        <svg className="ml-[10px]" width="16" height="16" viewBox="0 0 16 16" fill="none" stroke="#fff">
          <path d="M2.500 1.500h12v10h-12zM8.500 11.500v3M5 15h7M0.500 4.500h3v4h-3" />
        </svg>
        <svg className="ml-[9px]" width="14" height="14" viewBox="0 0 14 14" fill="none" stroke="#ddd">
          <path d="M1 5h2l3-3v10L3 9H1z" />
          <path d="M8.500 5c1 1 1 3 0 4M10.500 3c2 2 2 6 0 8" stroke="#999" />
        </svg>
        <span className="ml-[12px] w-[22px] text-[11.500px]">ESP</span>
        <div className="ml-[11px] flex w-[62px] flex-col items-center text-[11.500px] leading-[20px] tracking-[-0.300px]">
          <span>13:18</span>
          <span className="whitespace-nowrap">02/07/2020</span>
        </div>
        <svg className="ml-[13px]" width="17" height="18" viewBox="0 0 17 18">
          <path d="M0 1h16v13H0z" fill="#fff" />
          <path d="M3 4h10M3 7h10M3 10h10" stroke="#4a1c33" />
          <circle cx="13" cy="14" r="3.500" fill="#4a1c33" stroke="#fff" />
        </svg>
      </div>
    </div>
  );
}

export default function App() {
  return (
    <div className="flex h-[768px] w-[1366px] flex-col overflow-hidden bg-[#f0f0f0] font-['Lato',sans-serif]">
      <div className="bg-gradient-to-b from-white from-[55%] to-[#eeeeee]">
        <div className="flex h-[24px] items-center pb-[1px] pl-[4px] text-[12px] text-[#111]">
          <svg width="15" height="17" viewBox="0 0 15 17" fill="none">
            <path d="M1 1h9l4 4v11H1z" fill="#fbf1e6" stroke="#c66a38" />
            <path d="M10 0.500l4.500 4.500H10z" fill="#e0a040" />
            <path d="M4 7.500h7v5H4zM5.500 9.500h4M5.500 11h4" stroke="#c66a38" />
          </svg>
          <span className="ml-[4px]">Sin título 1 (remoto) - LibreOffice Impress</span>
          <div className="ml-auto flex items-center">
            <div className="mr-[36px] h-px w-[11px] bg-black" />
            <svg className="mr-[36px]" width="10" height="10" viewBox="0 0 10 10" fill="none" stroke="#000">
              <path d="M0.500 2.500h7v7h-7zM2.500 2.500v-2h7v7h-2" />
            </svg>
            <svg className="mr-[19px]" width="11" height="11" viewBox="0 0 11 11" stroke="#000">
              <path d="M0.500 0.500l10 10M10.500 0.500l-10 10" />
            </svg>
          </div>
        </div>
        <div className="flex h-[22px] items-center gap-[16px] pl-[8px] text-[11.800px] text-[#111]">
          <span><u>A</u>rchivo</span>
          <span><u>E</u>ditar</span>
          <span><u>V</u>er</span>
          <span><u>I</u>nsertar</span>
          <span><u>F</u>ormato</span>
          <span><u>D</u>iapositiva</span>
          <span><u>P</u>ase de diapositivas</span>
          <span><u>H</u>erramientas</span>
          <span>Ve<u>n</u>tana</span>
          <span>Ay<u>u</u>da</span>
          <svg className="ml-auto mr-[12px]" width="9" height="9" viewBox="0 0 9 9" stroke="#666">
            <path d="M0.500 0.500l8 8M8.500 0.500l-8 8" />
          </svg>
        </div>
        <ToolbarOne />
        <ToolbarTwo />
      </div>
      <div className="flex min-h-0 flex-1 border-t-2 border-[#a8a8a8]">
        <div className="flex w-[163px] shrink-0 flex-col">
          <div className="flex h-[25px] items-center justify-between pl-[3px] pr-[7px] pt-[2px] text-[12.250px] font-bold text-black">
            Diapositivas
            <svg width="10" height="10" viewBox="0 0 10 10" stroke="#777">
              <path d="M1 1l8 8M9 1L1 9" />
            </svg>
          </div>
          <div className="mx-[2px] mb-[3px] flex-1 border border-[#bcbcbc] bg-white pl-[8px] pt-[8px]">
            <div className="flex h-[71px] w-[138px] border border-[#6f8fae] bg-gradient-to-b from-[#86a9c6] to-[#a6c8e6] pl-[15px] pt-[3px]">
              <span className="text-[12px] font-bold leading-[14px] text-[#444]">1</span>
              <div className="ml-[2px] h-[62px] w-[109px] bg-white shadow-[1px_1px_2px_#555]" />
            </div>
          </div>
        </div>
        <Sash />
        <Editor />
        <Sash />
        <RightPanel />
        <SideTabs />
      </div>
      <StatusBar />
      <Taskbar />
    </div>
  );
}
